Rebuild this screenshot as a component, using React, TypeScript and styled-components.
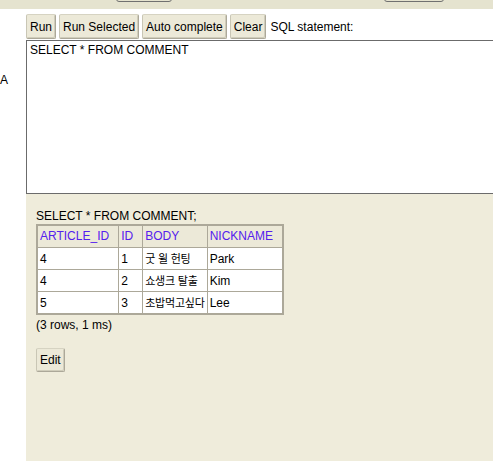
import React from "react";
import styled, { createGlobalStyle } from "styled-components";

const GlobalStyle = createGlobalStyle`
  html, body {
    margin: 0;
    padding: 0;
    background: #ffffff;
    overflow: hidden;
  }
  body {
    font-family: "Liberation Sans", Arial, "Noto Sans CJK KR", sans-serif;
    font-size: 12px;
    color: #000;
  }
`;

const Page = styled.div`
  display: flex;
  flex-direction: column;
  min-height: 100vh;
`;

const TopBar = styled.div`
  display: flex;
  align-items: flex-end;
  height: 9px;
  padding-bottom: 7px;
  box-sizing: border-box;
  overflow: hidden;
  background: #e5e3cf;
`;

const TopField = styled.div<{ $left: number; $width: number }>`
  flex: none;
  margin-left: ${({ $left }) => $left}px;
  width: ${({ $width }) => $width}px;
  height: 20px;
  box-sizing: border-box;
  border: 1px solid #707070;
  border-radius: 3px;
`;

const TopTitle = styled.span`
  flex: none;
  margin-left: 33px;
  font-weight: bold;
  font-size: 13px;
  line-height: 13px;
  margin-bottom: 4px;
`;

const Main = styled.div`
  display: flex;
  flex: 1;
`;

const SidePane = styled.div`
  flex: none;
  width: 26px;
  padding-top: 64px;
  overflow: hidden;
  white-space: nowrap;
  line-height: 14px;
`;

const Workspace = styled.div`
  flex: 1;
  min-width: 0;
  display: flex;
  flex-direction: column;
`;

const Toolbar = styled.div`
  display: flex;
  align-items: center;
  gap: 3px;
  padding-top: 5px;
  height: 25px;
  margin-bottom: 1px;
  white-space: nowrap;
`;

const Button = styled.button`
  flex: none;
  height: 25px;
  padding: 0 3px;
  font-family: "Liberation Sans", Arial, sans-serif;
  font-size: 12px;
  color: #000;
  background: #ece9d8;
  border: 1px solid #aca899;
  border-top-color: #d6d3c2;
  border-left-color: #c9c6b5;
  border-radius: 2px;
  box-shadow: inset -1px -1px 0 #d0cdbb;
`;

const ToolLabel = styled.span`
  margin-left: 1px;
`;

const Editor = styled.textarea`
  display: block;
  width: 100%;
  height: 154px;
  box-sizing: border-box;
  margin: 0;
  padding: 2px 3px;
  border: 1px solid #6b6b6b;
  border-right: none;
  font-family: "Liberation Sans", Arial, sans-serif;
  font-size: 12px;
  line-height: 14px;
  resize: none;
  outline: none;
  background: #ffffff;
`;

const Results = styled.div`
  flex: 1;
  background: #efecdb;
  padding: 15px 10px 10px;
  line-height: 14px;
`;

const Statement = styled.div`
  margin-bottom: 1px;
`;

const Grid = styled.table`
  border-collapse: collapse;
  border: 2px solid #aca899;
  background: #ffffff;
`;

const HeadCell = styled.th`
  background: #ece9d8;
  color: #5520ee;
  font-weight: normal;
  text-align: left;
  padding: 3px 9px 4px 2px;
  border: 1px solid #aca899;
  line-height: 14px;
`;

const Cell = styled.td<{ $cjk?: boolean }>`
  height: 16px;
  padding: 3px 2px 2px;
  border: 1px solid #aca899;
  line-height: 16px;
  white-space: nowrap;
  font-family: "Liberation Sans", Arial, "Noto Sans CJK KR", sans-serif;
  font-size: ${({ $cjk }) => ($cjk ? "11px" : "12px")};
  letter-spacing: ${({ $cjk }) => ($cjk ? "-0.2px" : "normal")};
`;

const Summary = styled.div`
  margin-top: 3px;
`;

const EditButton = styled(Button)`
  display: block;
  margin-top: 16px;
  height: 24px;
`;

const columns = ["ARTICLE_ID", "ID", "BODY", "NICKNAME"];

const rows = [
  ["4", "1", "굿 윌 헌팅", "Park"],
  ["4", "2", "쇼생크 탈출", "Kim"],
  ["5", "3", "초밥먹고싶다", "Lee"],
];

const App: React.FC = () => (
  <Page>
    <GlobalStyle />
    <TopBar>
      <TopField $left={116} $width={56} />
      <TopTitle>pap</TopTitle>
      <TopField $left={156} $width={60} />
    </TopBar>
    <Main>
      <SidePane>A</SidePane>
      <Workspace>
        <Toolbar>
          <Button>Run</Button>
          <Button>Run Selected</Button>
          <Button>Auto complete</Button>
          <Button>Clear</Button>
          <ToolLabel>SQL statement:</ToolLabel>
        </Toolbar>
        <Editor defaultValue="SELECT * FROM COMMENT" spellCheck={false} />
        <Results>
          <Statement>SELECT * FROM COMMENT;</Statement>
          <Grid>
            <thead>
              <tr>
                {columns.map((c) => (
                  <HeadCell key={c}>{c}</HeadCell>
                ))}
              </tr>
            </thead>
            <tbody>
              {rows.map((r, i) => (
                <tr key={i}>
                  {r.map((v, j) => (
                    <Cell key={j} $cjk={j === 2}>
                      {v}
                    </Cell>
                  ))}
                </tr>
              ))}
            </tbody>
          </Grid>
          <Summary>(3 rows, 1 ms)</Summary>
          <EditButton>Edit</EditButton>
        </Results>
      </Workspace>
    </Main>
  </Page>
);

export default App;
